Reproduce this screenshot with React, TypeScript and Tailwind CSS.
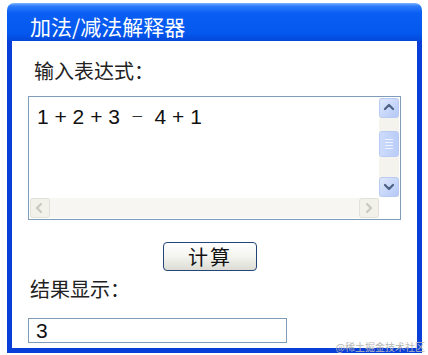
import React from 'react'

const CJK = "font-['Noto_Sans_CJK_SC',sans-serif]"
const ARIAL = "font-['Liberation_Sans','Noto_Sans_CJK_SC',sans-serif]"

function Arrow({ dir, color }: { dir: 'up' | 'down' | 'left' | 'right'; color: string }) {
  const d = {
    up: 'M3 8 L7 4 L11 8',
    down: 'M3 5 L7 9 L11 5',
    left: 'M8 3 L4 7 L8 11',
    right: 'M5 3 L9 7 L5 11',
  }[dir]
  return (
    <svg width="14" height="14" viewBox="0 0 14 14">
      <path d={d} fill="none" stroke={color} strokeWidth="2.2" strokeLinecap="round" strokeLinejoin="round" />
    </svg>
  )
}

function VButton({ dir }: { dir: 'up' | 'down' }) {
  return (
    <div className="w-[20px] h-[20px] rounded-[3px] border border-[#b9cbf3] bg-gradient-to-br from-[#dfe8fd] to-[#b4c8f6] flex items-center justify-center">
      <Arrow dir={dir} color="#4d6185" />
    </div>
  )
}

function HButton({ dir }: { dir: 'left' | 'right' }) {
  return (
    <div className="w-[20px] h-[20px] rounded-[3px] border border-[#e3e2da] bg-[#f2f1ea] flex items-center justify-center">
      <Arrow dir={dir} color="#c9c8c0" />
    </div>
  )
}

export default function App() {
  return (
    <div className="relative w-[428px] h-[355px] bg-white pl-[7px] pt-[3px] overflow-hidden">
      <div className="w-[415px] h-[350px] flex flex-col">
        {/* title bar */}
        <div className="h-[38px] rounded-t-[7px] bg-[linear-gradient(180deg,#7fb4ff_0px,#2f7dfb_3px,#0a5ef3_10px,#0558ee_30px,#0448da_38px)] pl-[23px] pt-[9px]">
          <span className={`${CJK} text-white text-[21px] leading-[28px]`}>加法/减法解释器</span>
        </div>

        {/* client */}
        <div className="flex-1 border-x-[5px] border-b-[5px] border-[#0a3ed8] bg-white flex flex-col">
          <div className={`${CJK} mt-[18px] ml-[22px] text-[20px] leading-[24px] text-[#222]`}>输入表达式：</div>

          {/* textarea */}
          <div className="mt-[13px] ml-[16px] w-[373px] h-[124px] border border-[#7f9db9] p-px flex">
            <div className="flex-1 flex flex-col">
              <div className={`${ARIAL} flex-1 pl-[7px] pt-[7px] text-[21px] leading-[24px] text-[#111] whitespace-pre`}>
                1 + 2 + 3 <span className="mx-[5px] text-[13px] align-[3px] text-[#333]">－</span> 4 + 1
              </div>
              <div className="h-[20px] flex bg-[#f7f6f2]">
                <HButton dir="left" />
                <div className="flex-1" />
                <HButton dir="right" />
              </div>
            </div>
            <div className="w-[20px] flex flex-col">
              <div className="flex-1 flex flex-col bg-[#f4f3ee]">
                <VButton dir="up" />
                <div className="mt-[13px] h-[26px] rounded-[3px] border border-[#b9cbf3] bg-gradient-to-r from-[#cddbfc] to-[#b9cdf8] flex flex-col items-center justify-center gap-[2px]">
                  <div className="w-[8px] h-px bg-[#eef3fe]" />
                  <div className="w-[8px] h-px bg-[#eef3fe]" />
                  <div className="w-[8px] h-px bg-[#eef3fe]" />
                  <div className="w-[8px] h-px bg-[#eef3fe]" />
                </div>
                <div className="flex-1" />
                <VButton dir="down" />
              </div>
              <div className="h-[21px] bg-white" />
            </div>
          </div>

          {/* button */}
          <div className="mt-[22px] ml-[151px]">
            <button
              type="button"
              className={`${CJK} w-[94px] h-[29px] rounded-[4px] border border-[#24457a] bg-gradient-to-b from-[#ffffff] via-[#f4f4f0] to-[#dcdcd4] text-[20px] leading-[24px] text-[#111] tracking-[2px] flex items-center justify-center`}
            >
              计算
            </button>
          </div>

          <div className={`${CJK} mt-[6px] ml-[18px] text-[20px] leading-[24px] text-[#222]`}>结果显示：</div>

          <div className={`${ARIAL} mt-[17px] ml-[16px] w-[259px] h-[25px] border border-[#7f9db9] pl-[7px] text-[21px] leading-[23px] text-[#111]`}>
            3
          </div>
        </div>
      </div>

      <div className={`${CJK} absolute right-[3px] bottom-[2px] text-[10px] leading-[12px] text-[#b8b8b8]`}>@稀土掘金技术社区</div>
    </div>
  )
}
